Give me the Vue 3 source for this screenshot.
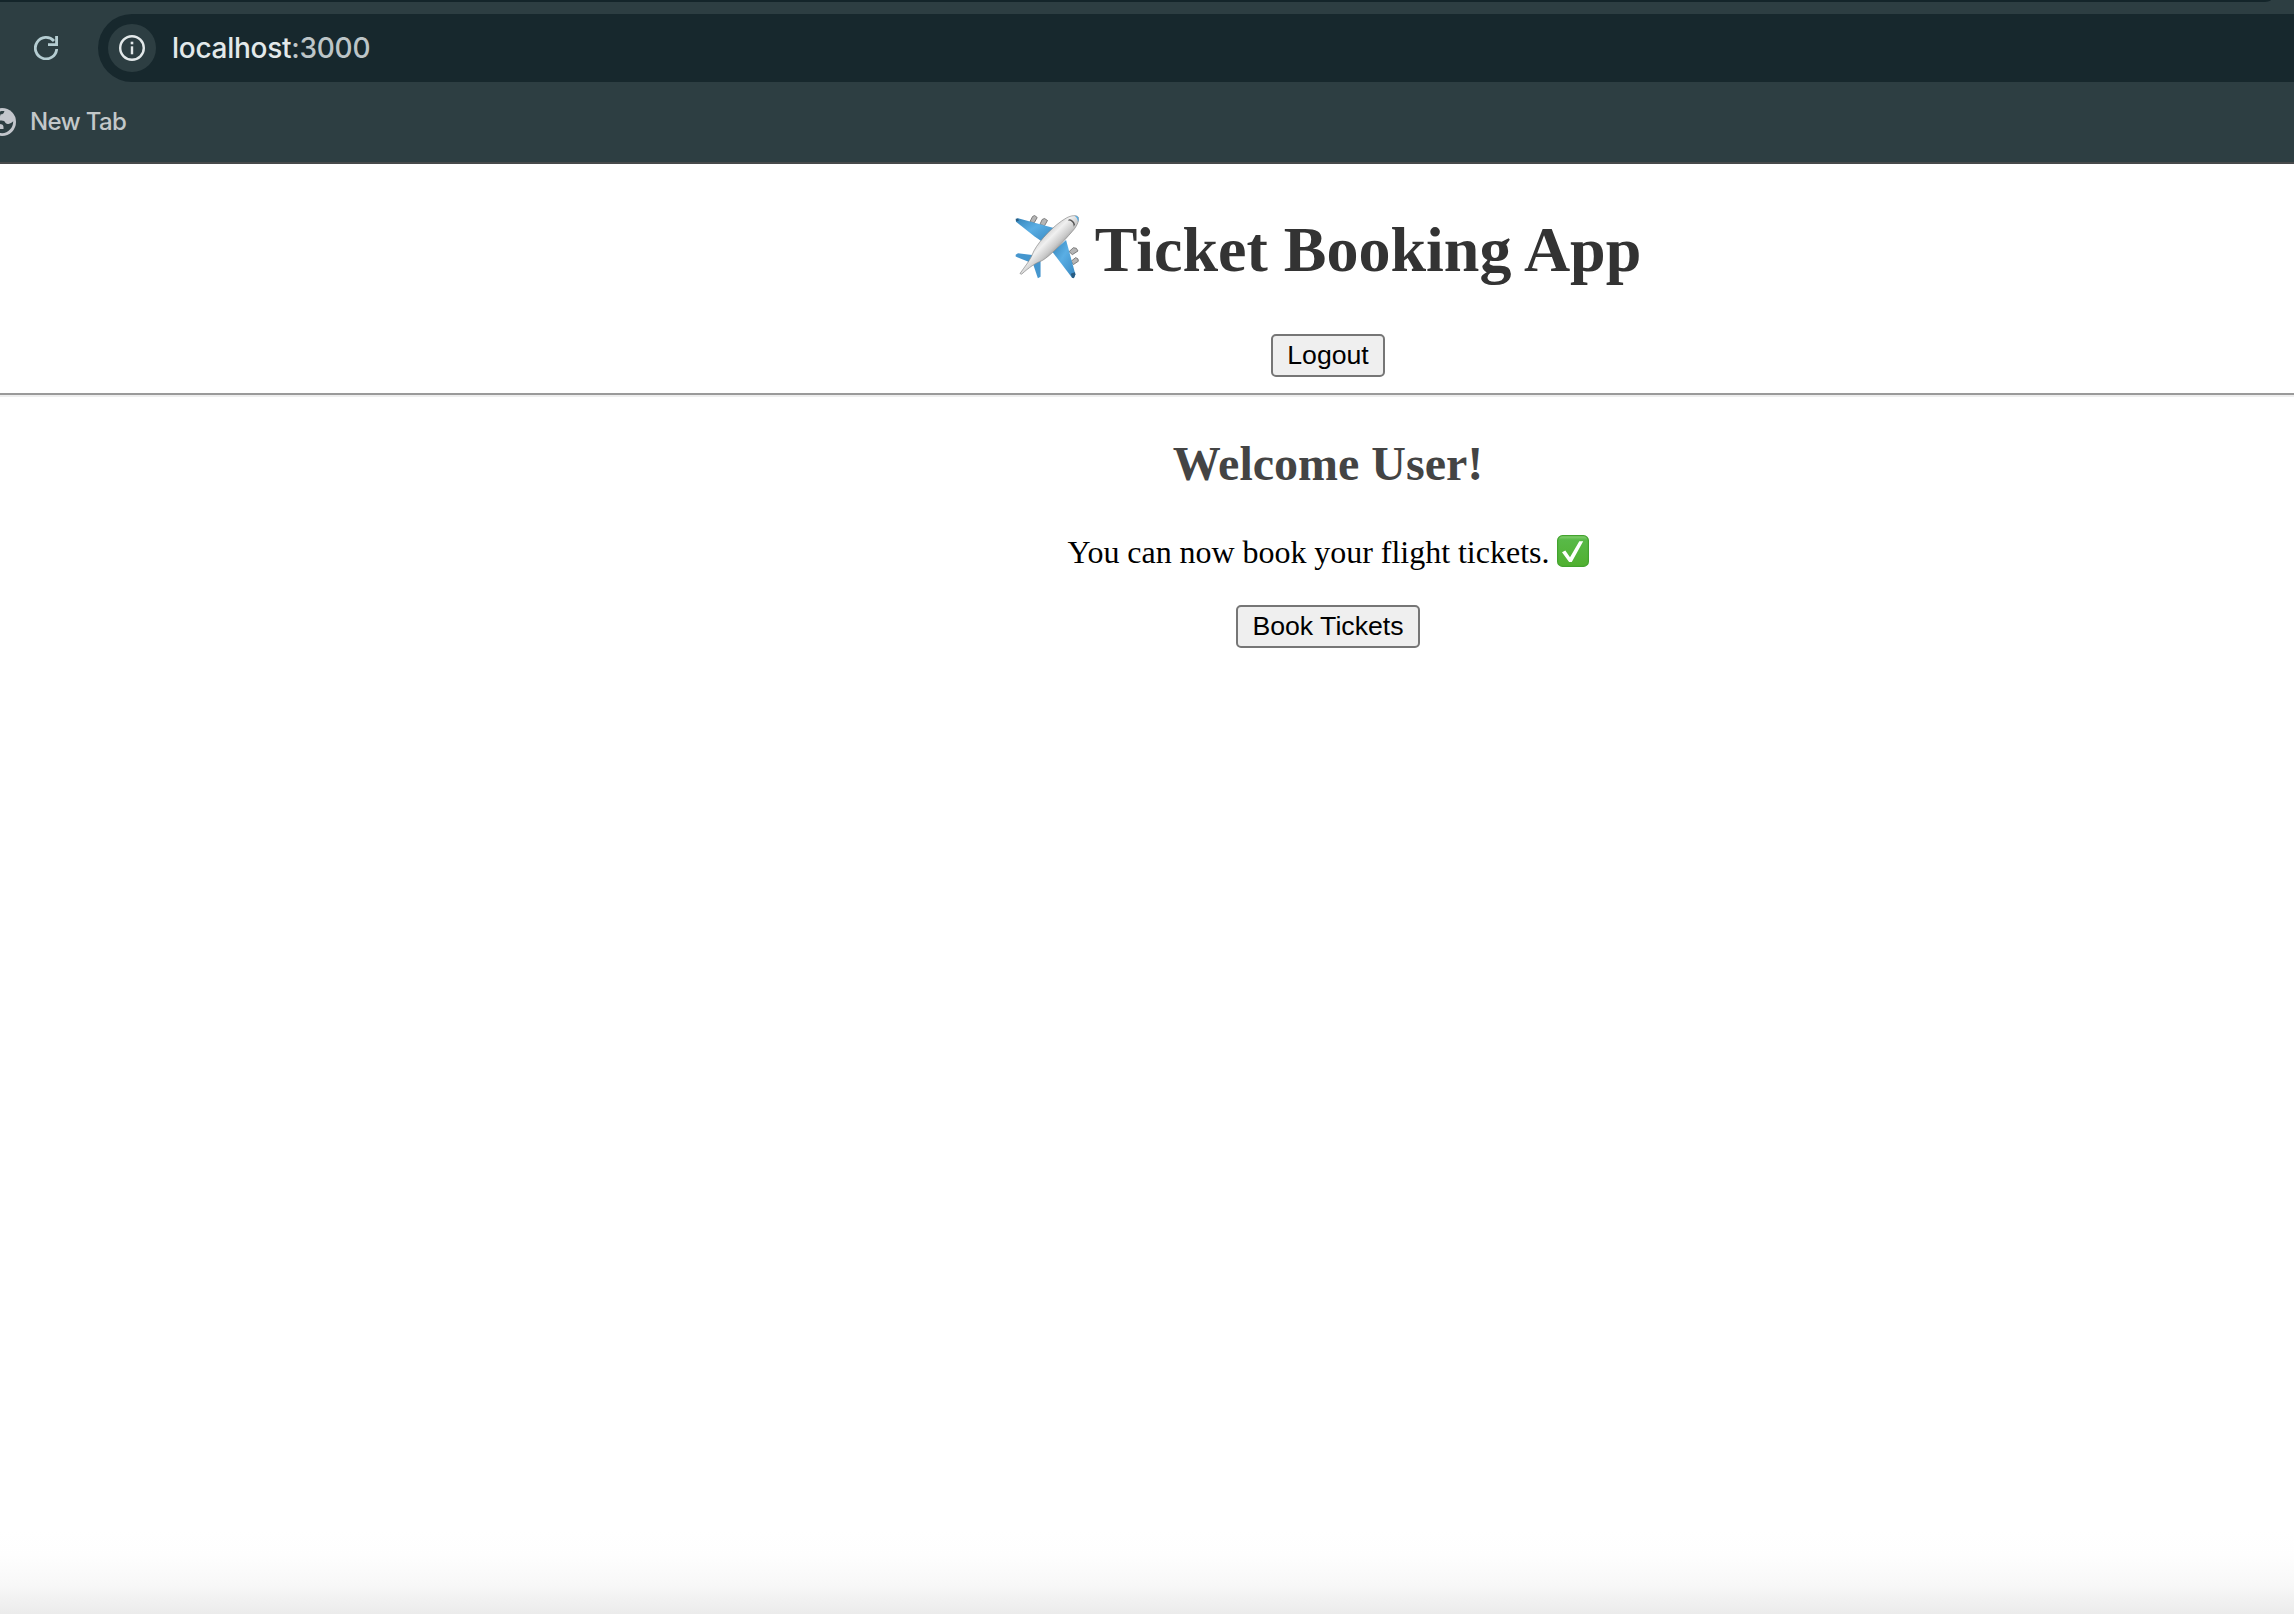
<script setup>
</script>

<template>
  <div class="screen">
    <header class="chrome">
      <div class="tab-strip"></div>
      <div class="toolbar">
        <svg class="reload" viewBox="0 0 24 24" width="24" height="24">
          <path d="M22.7 13A10.7 10.7 0 1 1 20 5" fill="none" stroke="#b5cdd2" stroke-width="2.8" />
          <path d="M22.6 0V8.6H14" fill="none" stroke="#b5cdd2" stroke-width="2.9" />
        </svg>
        <div class="omnibox">
          <span class="site-info">
            <svg viewBox="0 0 26 26" width="26" height="26">
              <circle cx="13" cy="13" r="11.8" fill="none" stroke="#e3e9ea" stroke-width="2.4" />
              <rect x="11.7" y="6.7" width="2.6" height="2.6" fill="#e3e9ea" />
              <rect x="11.8" y="11.3" width="2.4" height="8" fill="#e3e9ea" />
            </svg>
          </span>
          <span class="url">localhost<span class="port">:3000</span></span>
        </div>
      </div>
      <div class="bookmarks">
        <svg class="globe" viewBox="0 0 28 28" width="28" height="28">
          <circle cx="14" cy="14" r="14" fill="#c3c6cc" />
          <path d="M10 4.5C12 3.2 14.5 2.9 16.5 3.2L15.5 5.2C14.8 6.2 13.5 6.2 12.5 6.5L12 8.5 9 9z" fill="#2d3e42" />
          <path d="M9 12.5H13.5C15.5 12.6 17 13.2 17.2 14.6C17.8 15.8 19 16.2 20.5 15.9C22.5 15.6 23.6 14.6 25.2 13.2C25.4 19.5 20.5 25.2 14 25.2C12 25.2 10.5 24.8 9 24.2L11 21H15.5V19C15.5 17.3 14.5 16.3 13 16.2L9 15z" fill="#2d3e42" />
        </svg>
        <span class="bookmark">New Tab</span>
      </div>
    </header>

    <main class="page">
      <h1>
        <svg class="plane" viewBox="45 44 193 192" width="64" height="64">
          <defs>
            <linearGradient id="body" x1="0.3" y1="0.35" x2="0.65" y2="0.7">
              <stop offset="0" stop-color="#c4c4c4" />
              <stop offset="0.35" stop-color="#f0f0f0" />
              <stop offset="0.65" stop-color="#cacaca" />
              <stop offset="1" stop-color="#777" />
            </linearGradient>
            <linearGradient id="wing" x1="0" y1="0" x2="1" y2="1">
              <stop offset="0" stop-color="#3483b8" />
              <stop offset="0.45" stop-color="#5aaee4" />
              <stop offset="1" stop-color="#3787c0" />
            </linearGradient>
          </defs>
          <g fill="#b5b5b5" stroke="#6c6c6c" stroke-width="2.5">
            <path d="M90 64 98 48 104 45 112 51 103 67z" />
            <path d="M120 72 127 57 134 54 143 60 134 76z" />
            <path d="M208 154 221 142 230 144 235 152 218 163z" />
            <path d="M214 183 228 172 235 176 236 183 221 193z" />
          </g>
          <path d="M47 57 54 53 162 83 125 123 104 108 48 64z" fill="url(#wing)" />
          <path d="M199 119 227 222 224 232 217 233 158 155z" fill="url(#wing)" />
          <path d="M47 163 54 159 103 165 91 187 47 169z" fill="#4596ce" />
          <path d="M122 182 122 230 114 234 99 190z" fill="#4596ce" />
          <path d="M47 55 54 54 57 60 49 63zM213 221 226 216 227 224 222 234 217 233z" fill="#285c82" />
          <path d="M60 220C75 198 92 180 102 152C119 119 164 73 199 53C215 44 230 43 236 50C240 62 229 81 217 94C190 124 153 166 127 181C107 188 87 202 65 222z" fill="url(#body)" stroke="#858585" stroke-width="2" />
          <path d="M225 46C236 46 239 54 235 64C234 56 231 51 225 46z" fill="#4fa9e2" />
          <path d="M204 60C214 60 222 65 222 79L226 72C224 62 216 56 208 56z" fill="#555" />
        </svg>
        <span>Ticket Booking App</span>
      </h1>
      <button class="logout">Logout</button>
      <hr />
      <h2>Welcome User!</h2>
      <p>
        <span class="message">You can now book your flight tickets.</span>
        <svg class="check" viewBox="0 0 32 32" width="32" height="32">
          <defs>
            <linearGradient id="tile" x1="0" y1="0" x2="0" y2="1">
              <stop offset="0" stop-color="#8bd477" />
              <stop offset="0.14" stop-color="#58b947" />
              <stop offset="1" stop-color="#50b030" />
            </linearGradient>
          </defs>
          <rect x="0.6" y="0.6" width="30.8" height="30.8" rx="5" fill="url(#tile)" stroke="#43a32f" stroke-width="1.2" />
          <path d="M5 17.2 8.3 15.5 13 22.3 22.3 6.3 26.2 6.3 14.8 27 12.1 27z" fill="#fff" />
        </svg>
      </p>
      <button class="book">Book Tickets</button>
    </main>
    <div class="shade"></div>
  </div>
</template>

<style>
body {
  margin: 0;
  background: #fff;
}
</style>

<style scoped>
.screen {
  position: relative;
  width: 2294px;
  height: 1614px;
  overflow: hidden;
  background: #fff;
}
.chrome {
  box-sizing: border-box;
  height: 164px;
  background: #2d3e42;
  border-bottom: 2px solid #474a4b;
}
.tab-strip {
  width: 2271px;
  height: 2px;
  background: #14252a;
  border-bottom-right-radius: 10px 2px;
}
.toolbar {
  display: flex;
  align-items: center;
  height: 68px;
  margin-top: 12px;
  padding-left: 34px;
}
.reload {
  flex: none;
}
.omnibox {
  display: flex;
  flex: 1;
  align-items: center;
  box-sizing: border-box;
  height: 68px;
  margin-left: 40px;
  padding-left: 10px;
  border-radius: 34px 0 0 34px;
  background: #17282d;
}
.site-info {
  display: flex;
  align-items: center;
  justify-content: center;
  width: 48px;
  height: 48px;
  border-radius: 50%;
  background: #2d3e42;
}
.url {
  margin-left: 16px;
  color: #e3e9ea;
  font: 500 28px/34px Inter, sans-serif;
  letter-spacing: -0.27px;
}
.port {
  color: #bdc5c7;
}
.bookmarks {
  display: flex;
  align-items: center;
  height: 80px;
}
.globe {
  flex: none;
  margin-left: -12px;
}
.bookmark {
  margin-left: 14px;
  color: #c3c8c9;
  font: 500 24px/30px Inter, sans-serif;
  letter-spacing: -0.6px;
}
.page {
  display: flex;
  flex-direction: column;
  align-items: center;
  width: 2656px;
  padding-top: 49px;
  font-family: "Liberation Serif", serif;
}
h1 {
  display: flex;
  gap: 16px;
  margin: 0;
  color: #333;
  font-size: 64px;
  line-height: 74px;
}
.plane {
  margin-top: 2px;
}
button {
  box-sizing: border-box;
  height: 43px;
  padding: 0;
  border: 2px solid #767676;
  border-radius: 5px;
  background: #efefef;
  color: #000;
  font: 26.667px/37px "Liberation Sans", sans-serif;
}
.logout {
  width: 114px;
  margin-top: 47px;
}
hr {
  box-sizing: border-box;
  width: 100%;
  height: 4px;
  margin: 16px 0 0;
  border: 0;
  border-top: 2px solid #9a9a9a;
  border-bottom: 2px solid #eee;
}
h2 {
  margin: 39px 0 0;
  color: #444;
  font-size: 48px;
  line-height: 56px;
}
p {
  display: flex;
  gap: 7px;
  margin: 42px 0 0;
  color: #000;
  font-size: 32px;
  line-height: 36px;
}
.message {
  word-spacing: -0.15px;
}
.check {
  margin-top: 1px;
}
.book {
  width: 184px;
  margin-top: 35px;
}
.shade {
  position: absolute;
  right: 0;
  bottom: 0;
  left: 0;
  height: 84px;
  background: linear-gradient(#fff, #fefefe 30%, #f8f8f8 65%, #ebebeb);
}
</style>
